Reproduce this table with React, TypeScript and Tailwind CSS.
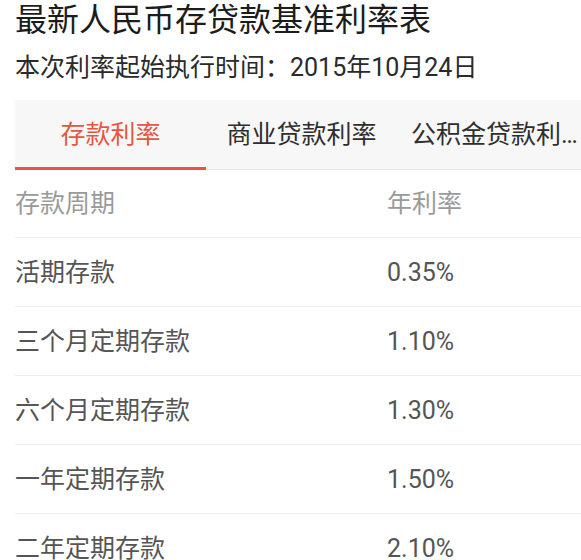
import React from "react";

const rows: [string, string][] = [
  ["活期存款", "0.35%"],
  ["三个月定期存款", "1.10%"],
  ["六个月定期存款", "1.30%"],
  ["一年定期存款", "1.50%"],
  ["二年定期存款", "2.10%"],
  ["三年定期存款", "2.75%"],
];

const tabs = ["存款利率", "商业贷款利率", "公积金贷款利率"];

export default function App() {
  return (
    <div
      className="w-[581px] h-[560px] overflow-hidden bg-white pl-[15px]"
      style={{ fontFamily: "Roboto, 'Noto Sans CJK SC', sans-serif" }}
    >
      <div className="h-[40px] flex items-center text-[32px] leading-none text-[#1c1c1c] whitespace-nowrap">
        最新人民币存贷款基准利率表
      </div>
      <div className="h-[54px] flex items-center text-[25px] leading-none text-[#2a2a2a] whitespace-nowrap">
        本次利率起始执行时间：2015年10月24日
      </div>
      <div className="mt-[6px] h-[70px] w-[590px] flex bg-[#f7f7f7] border-b border-[#e8e8e8]">
        {tabs.map((t, i) => (
          <div
            key={t}
            className={
              "relative w-[191px] shrink-0 flex items-center justify-center " +
              (i === 2 ? "pl-[14px] pr-[4px]" : "px-[14px]")
            }
          >
            <span
              className={
                "block min-w-0 truncate text-[25px] leading-normal " +
                (i === 0 ? "text-[#e8553f]" : "text-[#2e2e2e]")
              }
            >
              {t}
            </span>
            {i === 0 && (
              <div className="absolute left-0 right-0 bottom-[-1px] h-[3px] bg-[#e8553f]" />
            )}
          </div>
        ))}
      </div>
      <div className="flex h-[68px] items-center border-b border-[#eeeeee] text-[25px] leading-none text-[#9a9a9a] whitespace-nowrap">
        <div className="w-[372px] shrink-0">存款周期</div>
        <div>年利率</div>
      </div>
      {rows.map(([name, rate]) => (
        <div
          key={name}
          className="flex h-[69px] items-center border-b border-[#eeeeee] text-[25px] leading-none text-[#555555] whitespace-nowrap"
        >
          <div className="w-[372px] shrink-0">{name}</div>
          <div>{rate}</div>
        </div>
      ))}
    </div>
  );
}
